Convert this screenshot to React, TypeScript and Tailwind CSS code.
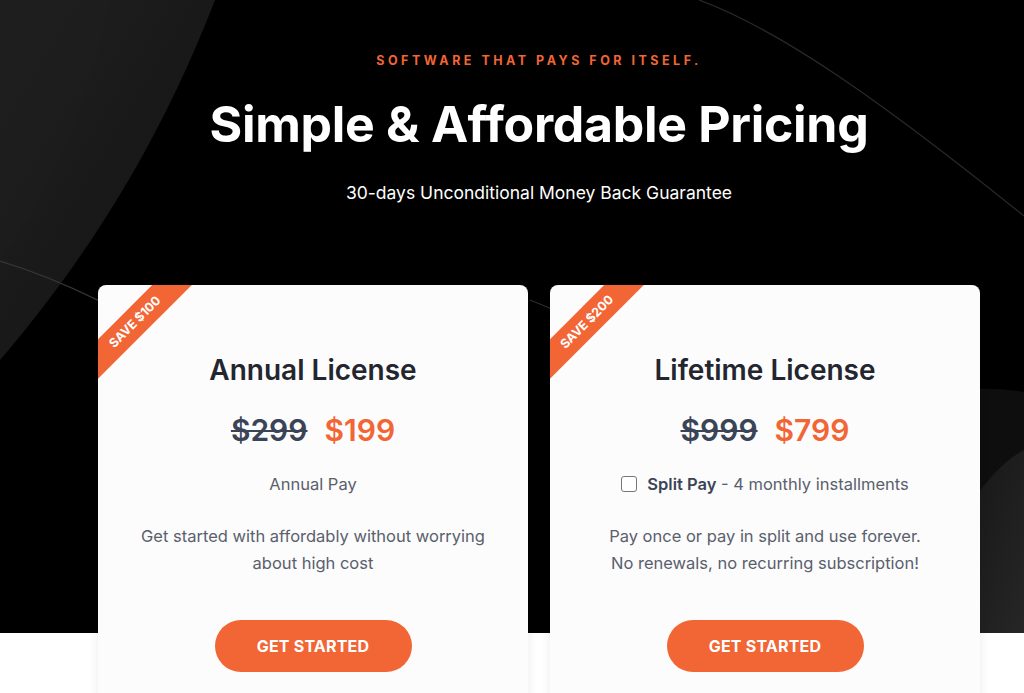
import React from 'react';

const font = { fontFamily: 'Inter, "Open Sans", sans-serif' };

type Plan = {
    save: string;
    title: string;
    oldPrice: string;
    price: string;
    split: boolean;
    lines: string[];
};

const plans: Plan[] = [
    {
        save: 'SAVE $100',
        title: 'Annual License',
        oldPrice: '$299',
        price: '$199',
        split: false,
        lines: ['Get started with affordably without worrying', 'about high cost'],
    },
    {
        save: 'SAVE $200',
        title: 'Lifetime License',
        oldPrice: '$999',
        price: '$799',
        split: true,
        lines: ['Pay once or pay in split and use forever.', 'No renewals, no recurring subscription!'],
    },
];

function Backdrop() {
    // decorative swooshes behind the hero
    return (
        <svg className="absolute inset-0 h-full w-full" viewBox="0 0 1024 633" preserveAspectRatio="none">
            <defs>
                <linearGradient id="lg1" x1="0" y1="0" x2="1" y2="1">
                    <stop offset="0" stopColor="#202020" />
                    <stop offset="1" stopColor="#121212" />
                </linearGradient>
                <linearGradient id="lg2" x1="0" y1="0" x2="1" y2="1">
                    <stop offset="0" stopColor="#161616" />
                    <stop offset="1" stopColor="#262626" />
                </linearGradient>
            </defs>
            <path d="M0 0 H215 C180 90 120 220 0 360 Z" fill="url(#lg1)" />
            <path d="M0 0 H110 C95 80 60 180 0 260 Z" fill="#1e1e1e" opacity="0.6" />
            <path d="M0 261 C130 300 260 390 460 560" stroke="#363636" strokeWidth="1.2" fill="none" />
            <path d="M699 0 C780 30 880 100 1024 216" stroke="#2a2a2a" strokeWidth="1.2" fill="none" />
            <path d="M530 300 C560 312 600 330 640 345" stroke="#363636" strokeWidth="1" fill="none" />
            <path d="M900 400 C960 385 1000 388 1024 392 V633 H900 Z" fill="#0e0e0e" />
            <path d="M960 520 C985 480 1005 460 1024 450 V633 H960 Z" fill="url(#lg2)" />
        </svg>
    );
}

function Card({ plan }: { plan: Plan }) {
    return (
        <div className="relative h-[430px] w-[430px] overflow-hidden rounded-lg bg-[#fcfcfc] text-center shadow-[0_2px_12px_rgba(0,0,0,0.08)]">
            <div className="absolute left-[-43px] top-[23px] flex h-[28px] w-[160px] -rotate-45 items-center justify-center bg-[#f26535] text-[12.5px] font-bold text-white">
                {plan.save}
            </div>
            <h3 className="pt-[68px] text-[28px] font-semibold leading-[34px] text-[#23262f]">{plan.title}</h3>
            <div className="mt-[25px] flex items-center justify-center gap-[17px] text-[30px] font-semibold leading-[36px]">
                <span className="text-[#3b4457] line-through decoration-2">{plan.oldPrice}</span>
                <span className="text-[#f26535]">{plan.price}</span>
            </div>
            {plan.split ? (
                <div className="mt-[25px] flex items-center justify-center gap-[10px] text-[16.5px] leading-[22px] text-[#5a606c]">
                    <span className="h-[16px] w-[16px] rounded-[3px] border border-[#767676] bg-white" />
                    <span>
                        <b className="font-semibold text-[#3b4457]">Split Pay</b> - 4 monthly installments
                    </span>
                </div>
            ) : (
                <p className="mt-[25px] text-[16.5px] leading-[22px] text-[#5a606c]">Annual Pay</p>
            )}
            <div className="mt-[28px] text-[16.5px] leading-[27px] text-[#5a606c]">
                {plan.lines.map((l) => (
                    <p key={l}>{l}</p>
                ))}
            </div>
            <button className="mx-auto mt-[43px] flex h-[52px] w-[197px] items-center justify-center rounded-full bg-[#f26535] text-[16px] font-bold tracking-[0.2px] text-white">
                GET STARTED
            </button>
        </div>
    );
}

export default function App() {
    return (
        <div className="relative min-h-[693px] w-full overflow-hidden bg-white" style={font}>
            <div className="absolute inset-x-0 top-0 h-[633px] bg-black">
                <Backdrop />
            </div>

            <div className="relative ml-[98px] w-[882px]">
                <div className="pt-[54px] text-center">
                    <p className="text-[12.5px] font-bold leading-[14px] tracking-[3.5px] text-[#f26535]">
                        SOFTWARE THAT PAYS FOR ITSELF.
                    </p>
                    <h1 className="mt-[28px] text-[50px] font-bold leading-[56px] tracking-[-0.3px] text-white">
                        Simple &amp; Affordable Pricing
                    </h1>
                    <p className="mt-[30px] text-[17.5px] leading-[22px] text-white">
                        30-days Unconditional Money Back Guarantee
                    </p>
                </div>

                <div className="mt-[81px] flex gap-[22px]">
                    {plans.map((p) => (
                        <Card key={p.title} plan={p} />
                    ))}
                </div>
            </div>
        </div>
    );
}
